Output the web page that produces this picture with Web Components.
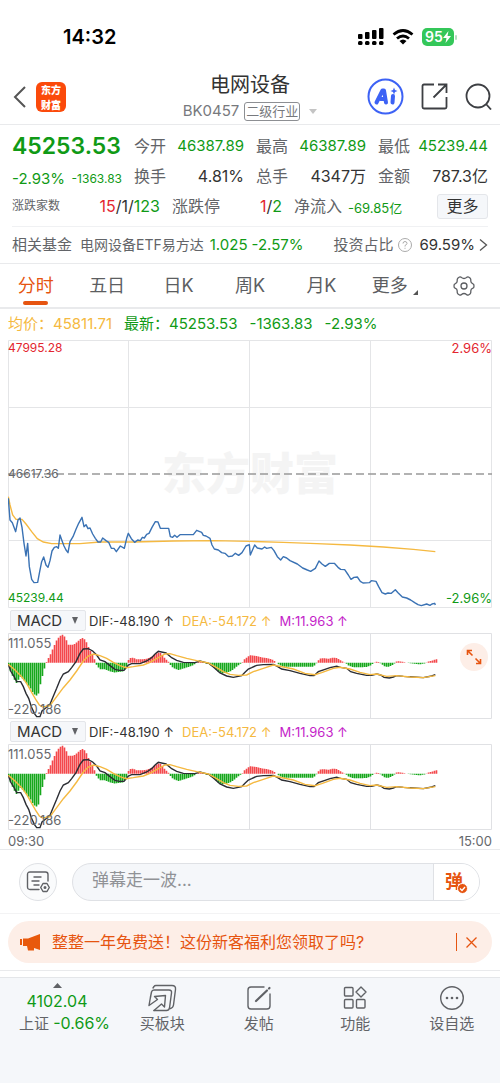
<!DOCTYPE html>
<html lang="zh-CN">
<head>
<meta charset="utf-8">
<meta name="viewport" content="width=device-width, initial-scale=1">
<title>电网设备 BK0457</title>
<style>
  :root{
    --up:#e3262f; --down:#109a16; --brand:#e65410; --avg:#f5b941;
    --ink:#333; --label:#626468; --rule:#e9eaec; --panel:#f5f7fa;
  }
  body{
    margin:0; background:#fff; color:var(--ink);
    font-family:Inter,"Noto Sans CJK SC",sans-serif; font-size:15px; line-height:20px;
  }
</style>
</head>
<body>
<status-bar time="14:32" battery="95"></status-bar>
<page-header code="BK0457" tag="二级行业">电网设备</page-header>
<main>
  <quote-panel></quote-panel>
  <fund-row></fund-row>
  <period-tabs></period-tabs>
  <price-chart></price-chart>
  <macd-panel expandable></macd-panel>
  <macd-panel></macd-panel>
  <time-axis><span>09:30</span><span>15:00</span></time-axis>
  <comment-bar></comment-bar>
  <promo-banner>整整一年免费送！这份新客福利您领取了吗?</promo-banner>
</main>
<bottom-bar>
  <bar-item label="买板块">
    <svg width="30" height="28" viewBox="0 0 30 28" fill="none" stroke="#606266" stroke-width="1.4" stroke-linejoin="round" stroke-linecap="round">
      <path d="M6 4 7 2.500Q7.500 1.500 9 1.500H25Q29 1.500 28.500 5.500L26.500 21Q26 24 23.500 24.500"/>
      <path d="M3.500 13 4.500 8Q5 6 7 6H22Q25 6 24.500 9L22.500 24Q22 26.500 19.500 26.500H7"/>
      <path d="M7 26.500 14.500 20 17.500 23 18.500 11.500 7.500 12.500 10.500 15.500 2 21.500 3.500 13"/>
    </svg>
  </bar-item>
  <bar-item label="发帖">
    <svg width="26" height="26" viewBox="0 0 26 26" fill="none" stroke="#606266" stroke-width="1.400" stroke-linecap="round">
      <path d="M18 2H5Q2 2 2 5V21Q2 24 5 24H21Q24 24 24 21V9"/>
      <path d="M10 16 21 5.500M23 3.500 23.500 3" stroke-width="2.200"/>
    </svg>
  </bar-item>
  <bar-item label="功能">
    <svg width="26" height="26" viewBox="0 0 26 26" fill="none" stroke="#606266" stroke-width="1.400" stroke-linejoin="round">
      <rect x="2.500" y="2.500" width="8.500" height="8.500" rx="1"/>
      <rect x="2.500" y="14.500" width="8.500" height="8.500" rx="1"/>
      <rect x="14.500" y="14.500" width="8.500" height="8.500" rx="1"/>
      <path d="M19 2 24 7 19 12 14 7Z"/>
    </svg>
  </bar-item>
  <bar-item label="设自选">
    <svg width="26" height="26" viewBox="0 0 26 26" fill="none" stroke="#606266" stroke-width="1.400">
      <circle cx="13" cy="13" r="11.300"/>
      <g fill="#606266" stroke="none"><circle cx="8" cy="13" r="1.300"/><circle cx="13" cy="13" r="1.300"/><circle cx="18" cy="13" r="1.300"/></g>
    </svg>
  </bar-item>
</bottom-bar>

<script>
// Reset shared by every shadow root
const base = /*html*/`<style>
  *,:host{box-sizing:border-box}
  :host{display:block}
  button,input,select{font:inherit;color:inherit;margin:0;padding:0;border:0;background:none;border-radius:0}
  a{color:inherit;text-decoration:none}
  svg{display:block;flex:none}
  .up{color:var(--up)} .down{color:var(--down)}
</style>`;

class BaseElement extends HTMLElement {
  constructor() {
    super();
    this.attachShadow({ mode: "open" });
  }
  connectedCallback() {
    this.shadowRoot.innerHTML = base + this.template();
  }
}

class StatusBar extends BaseElement {
  template() {
    return /*html*/`
      <style>
        :host{display:flex;align-items:center;justify-content:space-between;height:72px;padding:2px 43px 0 63px;color:#000}
        time{font-size:20px;font-weight:600}
        div{display:flex;align-items:center;gap:8px}
        .battery{display:flex;align-items:center;gap:1px}
        .level{display:flex;align-items:center;justify-content:center;width:32px;height:18px;border-radius:5px;background:#34c759;color:#fff;font-size:14px;font-weight:600}
        .cap{width:2px;height:5px;border-radius:1px;background:#b5dfbf}
      </style>
      <time>${this.getAttribute("time")}</time>
      <div>
        <svg width="26" height="18" viewBox="0 0 26 18">
          <rect x="0" y="6" width="4.500" height="5" rx="1"/><rect x="7" y="4" width="4.500" height="7" rx="1"/>
          <rect x="14" y="2" width="4.500" height="9" rx="1"/><rect x="21" y="0" width="4.500" height="11" rx="1"/>
          <rect x="0" y="13" width="4.500" height="4" rx="1.500"/><rect x="7" y="13" width="4.500" height="4" rx="1.500"/>
          <rect x="14" y="13" width="4.500" height="4" rx="1.500"/><rect x="21" y="13" width="4.500" height="4" rx="1.500"/>
        </svg>
        <svg width="22" height="16" viewBox="0 0 22 16" fill="none" stroke="#000" stroke-width="2.800">
          <path d="M1.500 5.500Q11-2.500 20.500 5.500"/><path d="M5 9.500Q11 4.500 17 9.500"/>
          <path d="M11 15.500 7.500 12Q11 9 14.500 12Z" fill="#000" stroke="none"/>
        </svg>
        <span class="battery">
          <span class="level">${this.getAttribute("battery")}<svg width="8" height="12" viewBox="0 0 8 12" fill="#fff"><path d="M5.500 0 0 7H3.500L2.500 12 8 5H4.500Z"/></svg></span>
          <span class="cap"></span>
        </span>
      </div>`;
  }
}

class PageHeader extends BaseElement {
  template() {
    return /*html*/`
      <style>
        :host{display:grid;grid-template-columns:1fr auto 1fr;align-items:center;height:53px;padding:0 8px 3px;border-bottom:1px solid var(--rule)}
        .side{display:flex;align-items:center;gap:9px;padding-left:4px}
        .side:last-child{justify-content:flex-end;gap:17px;padding:0}
        .logo{display:grid;place-content:center;width:30px;height:30px;border-radius:6px;background:#fb4a0b;color:#fff;
          font:900 10px/15px "Noto Sans CJK SC",sans-serif;text-align:center}
        h1{margin:0;font-size:20px;line-height:26px;font-weight:400;text-align:center}
        .sub{display:flex;align-items:center;gap:5px;margin-top:3px;color:#77797d;line-height:20px}
        .tag{padding:0 1px;border:1px solid #8d8f93;border-radius:3px;font-size:13px;line-height:17px}
        .sub svg{margin-left:4px}
      </style>
      <div class="side">
        <button aria-label="返回"><svg width="15" height="24" viewBox="0 0 15 24" fill="none" stroke="#555" stroke-width="2"><path d="M13 2 3 12 13 22"/></svg></button>
        <a class="logo" href="#"><span>东方</span><span>财富</span></a>
      </div>
      <div>
        <h1><slot></slot></h1>
        <div class="sub">${this.getAttribute("code")}<span class="tag">${this.getAttribute("tag")}</span>
          <svg width="8" height="5" viewBox="0 0 8 5" fill="#c4c4c4"><path d="M0 0H8L4 5Z"/></svg></div>
      </div>
      <div class="side">
        <button aria-label="AI"><svg width="37" height="37" viewBox="0 0 37 37">
          <circle cx="18.500" cy="18.500" r="17" fill="#fff" stroke="#3d62f5" stroke-width="2"/>
          <g fill="none" stroke="#3d62f5" stroke-linecap="round" stroke-linejoin="round" stroke-width="4">
            <path d="M9.500 24.500 15.500 12.500H17L19 24.500M13.500 21H18"/><path d="M26 18 25.500 24.500"/>
          </g>
          <path d="M27 9.500 28 12 30.500 13 28 14 27 16.500 26 14 23.500 13 26 12Z" fill="#3d62f5"/>
        </svg></button>
        <button aria-label="分享"><svg width="27" height="27" viewBox="0 0 27 27" fill="none" stroke="#3d3f43" stroke-width="1.800">
          <path d="M13 1.500H3Q1.500 1.500 1.500 3V24Q1.500 25.500 3 25.500H24Q25.500 25.500 25.500 24V14"/><path d="M12.500 14.500 25 2M17 1.500H25.500V10"/>
        </svg></button>
        <button aria-label="搜索"><svg width="27" height="27" viewBox="0 0 27 27" fill="none" stroke="#3d3f43" stroke-width="1.800">
          <circle cx="13" cy="13" r="11.500"/><path d="M21 21 26 26.500"/>
        </svg></button>
      </div>`;
  }
}

class QuotePanel extends BaseElement {
  template() {
    const cell = (label, value, cls = "") =>
      `<div class="cell"><span class="label">${label}</span><span class="${cls}">${value}</span></div>`;
    return /*html*/`
      <style>
        :host{padding:6px 12px 0}
        .grid{display:grid;grid-template-columns:repeat(4,minmax(0,1fr));column-gap:12px}
        .counts{display:grid;grid-template-columns:148fr 110fr 194fr;column-gap:12px;padding-bottom:5px;border-bottom:1px solid #f0f1f3}
        .cell{display:flex;align-items:center;justify-content:space-between;height:30px;font-size:16px;white-space:nowrap}
        .cell .down{font-size:15px}
        .label{color:var(--label)}
        .price{font-size:23px;font-weight:600;color:var(--down)}
        .change{padding-top:6px}
        .cell .pct{font-size:15px}
        .cell .abs,.cell .note{font-size:12px}
        .counts .cell .down{font-size:16px}
        .counts .cell .flow{font-size:13px;margin-right:auto;margin-left:6px;padding-top:3px}
        button{width:51px;height:25px;border:1px solid #e4e6ea;border-radius:3px;background:var(--panel);font-size:16px;line-height:22px}
      </style>
      <div class="grid">
        <div class="cell"><strong class="price">45253.53</strong></div>
        ${cell("今开", "46387.89", "down")}${cell("最高", "46387.89", "down")}${cell("最低", "45239.44", "down")}
        <div class="cell change"><span class="down pct">-2.93%</span><span class="down abs">-1363.83</span></div>
        ${cell("换手", "4.81%")}${cell("总手", "4347万")}${cell("金额", "787.3亿")}
      </div>
      <div class="counts">
        <div class="cell"><span class="label note">涨跌家数</span><span><span class="up">15</span>/1/<span class="down">123</span></span></div>
        <div class="cell"><span class="label">涨跌停</span><span><span class="up">1</span>/<span class="down">2</span></span></div>
        <div class="cell"><span class="label">净流入</span><span class="down flow">-69.85亿</span><button>更多</button></div>
      </div>`;
  }
}

class FundRow extends BaseElement {
  template() {
    return /*html*/`
      <style>
        :host{display:flex;align-items:center;height:37px;padding:0 12px;border-bottom:1px solid var(--rule);white-space:nowrap}
        span{color:var(--label)}
        b{font-weight:400}
        .name{font-size:14px;margin:0 6px 0 8px}
        .down{margin-right:4px}
        .ratio{display:flex;align-items:center;gap:4px;margin-left:auto}
        .ratio b{margin-left:4px}
      </style>
      <span>相关基金</span>
      <a href="#"><span class="name">电网设备ETF易方达</span></a>
      <b class="down">1.025</b><b class="down">-2.57%</b>
      <div class="ratio">
        <span>投资占比</span>
        <svg width="14" height="14" viewBox="0 0 14 14" fill="none" stroke="#aaa"><circle cx="7" cy="7" r="6.500"/><path d="M5 5.500Q5 3.500 7 3.500T9 5.500Q9 6.500 7 7.500V8.500M7 9.800V10.800"/></svg>
        <b>69.59%</b>
        <svg width="9" height="14" viewBox="0 0 9 14" fill="none" stroke="#555" stroke-width="1.300"><path d="M1 1.500 7.500 7 1 12.500"/></svg>
      </div>`;
  }
}

class PeriodTabs extends BaseElement {
  template() {
    const tabs = ["分时", "五日", "日K", "周K", "月K"];
    return /*html*/`
      <style>
        :host{border-bottom:2px solid var(--rule)}
        nav{display:grid;grid-template-columns:repeat(7,1fr)}
        button{display:flex;align-items:center;justify-content:center;height:43px;font-size:18px;color:#5c5e62;white-space:nowrap}
        .active{flex-direction:column;gap:3px;padding:10px 0 2px;line-height:24px;color:var(--brand)}
        .active::after{content:"";width:25px;height:4px;border-radius:2px;background:var(--brand)}
        .more{padding-left:4px}
        .more svg{margin:14px 0 0 5px}
      </style>
      <nav>
        ${tabs.map((t, i) => `<button${i ? "" : ' class="active"'}>${t}</button>`).join("")}
        <button class="more">更多<svg width="5" height="5" viewBox="0 0 5 5" fill="#555"><path d="M5 0V5H0Z"/></svg></button>
        <button aria-label="设置"><svg width="22" height="20" viewBox="0 0 22 20" fill="none" stroke="#5c5e62" stroke-width="1.300" stroke-linejoin="round">
          <path d="M6.500 1Q7.500.500 8.500 1.500 11 3.500 13.500 1.500 14.500.500 15.500 1L17 2Q18 3 17.800 4.500 17.500 7 20 7.800 21 8 21 10T20 12.200Q17.500 13 17.800 15.500 18 17 17 18L15.500 19Q14.500 19.500 13.500 18.500 11 16.500 8.500 18.500 7.500 19.500 6.500 19L5 18Q4 17 4.200 15.500 4.500 13 2 12.200 1 12 1 10T2 7.800Q4.500 7 4.200 4.500 4 3 5 2Z"/>
          <circle cx="11" cy="10" r="3"/>
        </svg></button>
      </nav>`;
  }
}

// Plot coordinates: 3 units per pixel, x runs 24..1476 over the trading day
const gridX = [385.5, 748.5, 1111.5];

const vLines = (top, bottom) =>
  gridX.map(x => `<path d="M${x} ${top}V${bottom}"/>`).join("");

class PriceChart extends BaseElement {
  static price = `25,175 30,240 37,248 47,275 54,240 60,234 66,262 72,310 78,348 83,310 88,380 95,418 102,428 113,427
    119,395 125,365 131,351 138,375 144,382 150,362 156,333 163,322 170,320 175,325 180,285 186,302 192,318 198,330
    204,338 210,305 219,290 228,268 236,250 246,232 252,260 258,254 264,266 270,264 278,282 286,295 294,306 302,306
    308,294 318,302 326,307 334,325 342,325 349,335 361,318 373,325 380,295 385,280 394,296 404,307 413,300 421,302
    427,292 433,294 440,283 447,280 456,262 466,245 474,246 481,265 506,265 511,290 518,292 524,286 531,292 540,284
    580,284 590,271 605,277 610,286 618,288 630,295 636,315 643,327 655,330 665,338 675,340 686,350 697,348 706,340
    716,346 726,338 738,318 748,314 751,345 764,315 772,324 786,327 794,321 800,325 814,322 822,332 832,350 842,360
    850,350 860,354 870,362 892,372 908,384 922,390 932,394 946,385 957,363 966,372 976,379 988,370 1003,370 1014,382
    1022,388 1034,389 1045,405 1053,418 1062,412 1072,411 1081,424 1089,429 1108,428 1114,422 1128,424 1136,440
    1146,458 1156,462 1164,459 1174,460 1186,449 1194,458 1207,471 1220,474 1232,480 1244,488 1254,494 1264,497
    1280,492 1290,496 1296,492 1304,490 1306,495`;
  static average = `25,170 30,195 38,225 48,238 66,238 78,252 95,275 112,296 130,306 155,311 240,311 300,306 400,306
    520,303 640,302 750,304 850,307 950,311 1050,315 1150,321 1240,328 1306,335`;

  template() {
    return /*html*/`
      <style>
        .legend{display:flex;gap:12px;padding:5px 8px;height:31px;color:var(--down);white-space:nowrap}
        .legend .avg{color:var(--avg)}
        .plot{display:grid;grid-template:100% / 100%;height:268px;margin:0 8px;font-size:12px;line-height:16px}
        .plot > *{grid-area:1/1;width:max-content}
        .plot > svg{width:100%;height:100%}
        .mark{place-self:center;color:#f4f4f4;font-size:44px;line-height:48px;font-weight:900}
        .mid{align-self:center;color:#66686c}
        .low{align-self:end;padding-bottom:2px}
        .right{justify-self:end;font-size:13px}
        polyline,path{vector-effect:non-scaling-stroke;fill:none}
      </style>
      <div class="legend">
        <span class="avg">均价：45811.71</span><span>最新：45253.53</span><span>-1363.83</span><span>-2.93%</span>
      </div>
      <div class="plot">
        <span class="mark">东方财富</span>
        <svg viewBox="24 -300 1452 804" preserveAspectRatio="none">
          <g stroke="#e4e5e7">
            <path d="M25.500-298.500H1474.500V502.500H25.500Z"/>${vLines(-300, 504)}
            <path d="M24-97.500H1476M24 301.500H1476"/>
          </g>
          <path d="M24 102H1476" stroke="#999" stroke-width="1.500" stroke-dasharray="8 4"/>
          <polyline points="${PriceChart.average}" stroke="#f5b941" stroke-width="1.400"/>
          <polyline points="${PriceChart.price}" stroke="#3a72b4" stroke-width="1.400" stroke-linejoin="round"/>
        </svg>
        <span class="up">47995.28</span><span class="up right">2.96%</span>
        <span class="mid">46617.36</span>
        <span class="down low">45239.44</span><span class="down low right">-2.96%</span>
      </div>`;
  }
}

class MacdPanel extends BaseElement {
  static zero = 173;
  // histogram outline as [x, height] pairs
  static hist = [[25,-6],[30,-22],[40,-45],[50,-62],[57,-48],[62,-42],[70,-50],[80,-62],[90,-75],[100,-92],[108,-100],
    [116,-92],[122,-62],[130,-30],[136,-8],[141,6],[150,22],[160,45],[170,68],[180,80],[188,84],[196,76],[205,54],
    [220,54],[232,62],[240,70],[250,75],[258,65],[264,50],[275,28],[282,14],[286,4],[290,-8],[300,-20],[315,-20],
    [330,-26],[345,-30],[355,-28],[370,-26],[378,-14],[383,-3],[386,10],[394,16],[402,14],[410,10],[425,10],[440,12],
    [455,18],[470,28],[478,32],[485,26],[492,16],[500,8],[506,2],[512,-8],[520,-16],[536,-22],[555,-16],[575,-10],
    [585,-4],[595,3],[605,3],[615,-2],[625,-4],[640,-12],[655,-28],[665,-32],[680,-30],[695,-24],[710,-12],[720,-4],
    [728,2],[735,12],[750,22],[770,20],[785,16],[800,14],[815,10],[825,4],[832,-2],[840,-8],[850,-12],[940,-12],
    [948,-4],[953,4],[960,12],[970,14],[985,12],[1000,15],[1010,14],[1020,8],[1030,2],[1038,-2],[1045,-8],[1060,-14],
    [1080,-14],[1100,-13],[1112,-8],[1120,-2],[1128,3],[1138,2],[1144,-4],[1152,-10],[1162,-13],[1172,-10],[1182,-4],
    [1190,4],[1200,4],[1210,2],[1230,-2],[1260,-5],[1275,-2],[1285,3],[1298,7],[1312,11]];
  static dif = `25,178 32,198 42,214 50,230 62,230 70,245 78,265 86,280 94,305 103,325 110,335 120,335 126,318 138,308
    150,298 158,278 170,250 180,225 190,207 205,200 215,188 228,170 240,145 250,132 265,131 278,138 290,150 300,165
    315,170 330,182 345,193 358,196 372,196 385,180 395,176 420,176 440,168 455,158 466,146 475,139 498,144 515,158
    530,166 550,172 585,173 600,168 615,172 628,176 640,186 660,204 680,213 700,217 725,212 735,202 745,192 755,188
    770,181 790,179 820,178 832,184 845,192 870,197 900,205 930,212 942,212 955,200 975,193 990,188 1010,184 1022,187
    1040,190 1052,200 1070,205 1100,211 1115,211 1130,207 1142,210 1152,217 1168,219 1180,216 1190,212 1210,214
    1240,216 1270,218 1295,213 1306,209`;
  static dea = `25,178 45,195 65,215 80,235 95,262 108,285 118,300 128,306 150,302 170,275 190,248 210,225 230,198
    250,168 265,153 280,147 300,152 320,160 340,172 360,182 378,188 400,185 430,180 450,172 475,158 495,147 510,146
    530,152 560,160 590,167 625,174 650,188 670,200 690,208 715,211 740,210 760,200 790,190 820,180 850,186 880,192
    915,205 945,209 965,203 1000,190 1020,187 1050,192 1080,202 1110,209 1130,207 1160,214 1190,212 1230,216
    1270,218 1306,212`;

  // one bar a minute, read off the outline
  #bars() {
    const { hist, zero } = MacdPanel;
    let up = "", down = "";
    for (let x = 25.5; x <= 1312; x += 6) {
      const i = Math.max(1, hist.findIndex(p => p[0] >= x));
      const [x0, y0] = hist[i - 1], [x1, y1] = hist[i];
      const h = y0 + (y1 - y0) * (x - x0) / (x1 - x0);
      const bar = `M${x} ${zero}v${(-h).toFixed(1)}`;
      if (h > 0) up += bar; else down += bar;
    }
    return `<path d="${up}" stroke="#f4484c"/><path d="${down}" stroke="#16a81c"/>`;
  }

  template() {
    return /*html*/`
      <style>
        :host{padding:0 8px}
        .head{display:flex;align-items:center;gap:8px;height:25px;padding-left:2px;font-size:13px;white-space:nowrap}
        label{display:flex;align-items:center;width:76px;height:21px;margin-right:-5px;border:1px solid #e4e6ea;border-radius:2px;background:var(--panel);font-size:15px}
        select{appearance:none;width:100%;height:19px;padding-left:6px;line-height:19px;outline:0}
        label svg{margin:0 6px 0 -14px;pointer-events:none}
        .dea{color:var(--avg)} .m{color:#c41fc9}
        .plot{position:relative;display:grid;grid-template:100% / 100%;height:86px;font-size:13px;line-height:20px;color:#66686c}
        .plot > *{grid-area:1/1}
        .plot > svg{width:100%;height:100%}
        .low{align-self:end}
        .plot path,polyline{vector-effect:non-scaling-stroke;fill:none}
        .bars{stroke-width:1.600}
        button{position:absolute;top:10px;right:4px;display:grid;place-items:center;width:28px;height:28px;border-radius:50%;background:#fdeee7}
      </style>
      <div class="head">
        <label><select aria-label="指标"><option>MACD</option></select>
          <svg width="8" height="7" viewBox="0 0 8 7" fill="#606266"><path d="M1 0H7L4 7Z"/></svg></label>
        <span>DIF:-48.190 ↑</span><span class="dea">DEA:-54.172 ↑</span><span class="m">M:11.963 ↑</span>
      </div>
      <div class="plot">
        <svg viewBox="24 84 1452 258" preserveAspectRatio="none">
          <g stroke="#e0e1e4"><path d="M25.500 85.500H1474.500V340.500H25.500Z"/>${vLines(84, 342)}</g>
          <g class="bars">${this.#bars()}</g>
          <polyline points="${MacdPanel.dif}" stroke="#2b2d33" stroke-width="1.400"/>
          <polyline points="${MacdPanel.dea}" stroke="#f5b941" stroke-width="1.400"/>
        </svg>
        <span>111.055</span><span class="low">-220.186</span>
        ${this.hasAttribute("expandable") ? `<button aria-label="全屏"><svg width="16" height="16" viewBox="0 0 16 16" fill="none" stroke="#e65410" stroke-width="1.600"><path d="M1.500 6V1.500H6M1.500 1.500 6.500 6.500M14.500 10V14.500H10M14.500 14.500 9.500 9.500"/></svg></button>` : ""}
      </div>`;
  }
}

class TimeAxis extends BaseElement {
  template() {
    return /*html*/`
      <style>
        :host{display:flex;justify-content:space-between;height:20px;padding:1px 8px 0;border-bottom:1px solid var(--rule);font-size:13px;color:#66686c}
      </style>
      <slot></slot>`;
  }
}

class CommentBar extends BaseElement {
  template() {
    return /*html*/`
      <style>
        :host{display:flex;gap:15px;padding:13px 20px 12px 19px;border-bottom:1px solid #f3f3f4}
        .set{display:grid;place-items:center;width:38px;height:38px;border:1px solid #dfe1e5;border-radius:50%;background:#fafbfc}
        .field{flex:1;display:flex;height:38px;border:1px solid #dfe1e5;border-radius:19px;overflow:hidden;background:var(--panel)}
        input{flex:1;min-width:0;padding:0 19px 4px;font-size:17px;outline:0}
        input::placeholder{color:#909296;opacity:1}
        .send{position:relative;width:46px;border-left:1px solid #dfe1e5;background:#fff;color:var(--brand);font-size:18px;line-height:34px;font-weight:700;text-align:left;padding-left:11px}
        .send svg{position:absolute;right:11px;bottom:6px}
      </style>
      <button class="set" aria-label="弹幕设置"><svg width="24" height="22" viewBox="0 0 24 22" fill="none" stroke="#606266" stroke-width="1.400" stroke-linecap="round">
        <path d="M13 18.500H4Q1.500 18.500 1.500 16V3.500Q1.500 1 4 1H19.500Q22 1 22 3.500V10M8 6H15M6 10H13M8 14H13"/>
        <path d="M17 12.500H21L23.300 16.500 21 20.500H17L14.700 16.500Z" stroke-linejoin="round"/><circle cx="19" cy="16.500" r=".8"/>
      </svg></button>
      <div class="field">
        <input type="text" aria-label="弹幕" placeholder="弹幕走一波...">
        <button class="send">弹<svg width="11" height="11" viewBox="0 0 11 11"><circle cx="5.500" cy="5.500" r="5" fill="#e65410" stroke="#fff"/><path d="M3 5.500 5 7.500 8 4" fill="none" stroke="#fff" stroke-width="1.300"/></svg></button>
      </div>`;
  }
}

class PromoBanner extends BaseElement {
  template() {
    return /*html*/`
      <style>
        :host{padding:7px 8px;border-bottom:1px solid var(--rule)}
        div{display:flex;align-items:center;height:42px;padding:0 15px 0 12px;border-radius:21px;background:#fdeee7;color:var(--brand);font-size:16px}
        a{flex:1;margin-left:12px;white-space:nowrap}
        button{padding-left:9px;border-left:1px solid var(--brand);height:18px}
      </style>
      <div>
        <svg width="20" height="18" viewBox="0 0 20 18" fill="#e8590c"><path d="M0 6H2V12H0ZM3 5.500H8L20 1V17L14 15V17.500H8L7 13H3Z"/></svg>
        <a href="#"><slot></slot></a>
        <button aria-label="关闭"><svg width="11" height="11" viewBox="0 0 11 11" fill="none" stroke="#e65410" stroke-width="1.300"><path d="M.5.500 10.500 10.500M10.500.500.500 10.500"/></svg></button>
      </div>`;
  }
}

class BottomBar extends BaseElement {
  template() {
    return /*html*/`
      <style>
        :host{display:grid;grid-template-columns:114px repeat(4,1fr);min-height:106px;margin-top:6px;border-top:1px solid #e4e6e9;background:var(--panel)}
        a{padding:5px 0 0 19px;font-size:15px;color:var(--label);white-space:nowrap}
        .top{display:grid;row-gap:2px;justify-items:center;width:76px}
        .index{font-size:16px;line-height:22px}
      </style>
      <a href="#">
        <div class="top down"><svg width="9" height="5" viewBox="0 0 9 5" fill="#606266"><path d="M4.500 0 9 5H0Z"/></svg><span class="index">4102.04</span></div>
        <div>上证 <span class="down index">-0.66%</span></div>
      </a>
      <slot></slot>`;
  }
}

class BarItem extends BaseElement {
  template() {
    return /*html*/`
      <style>
        button{display:flex;flex-direction:column;align-items:center;width:100%;padding-top:5px;color:var(--label)}
        .icon{display:grid;place-items:center;height:30px}
        .text{line-height:22px}
      </style>
      <button><span class="icon"><slot></slot></span><span class="text">${this.getAttribute("label")}</span></button>`;
  }
}

customElements.define("status-bar", StatusBar);
customElements.define("page-header", PageHeader);
customElements.define("quote-panel", QuotePanel);
customElements.define("fund-row", FundRow);
customElements.define("period-tabs", PeriodTabs);
customElements.define("price-chart", PriceChart);
customElements.define("macd-panel", MacdPanel);
customElements.define("time-axis", TimeAxis);
customElements.define("comment-bar", CommentBar);
customElements.define("promo-banner", PromoBanner);
customElements.define("bottom-bar", BottomBar);
customElements.define("bar-item", BarItem);
</script>
</body>
</html>
